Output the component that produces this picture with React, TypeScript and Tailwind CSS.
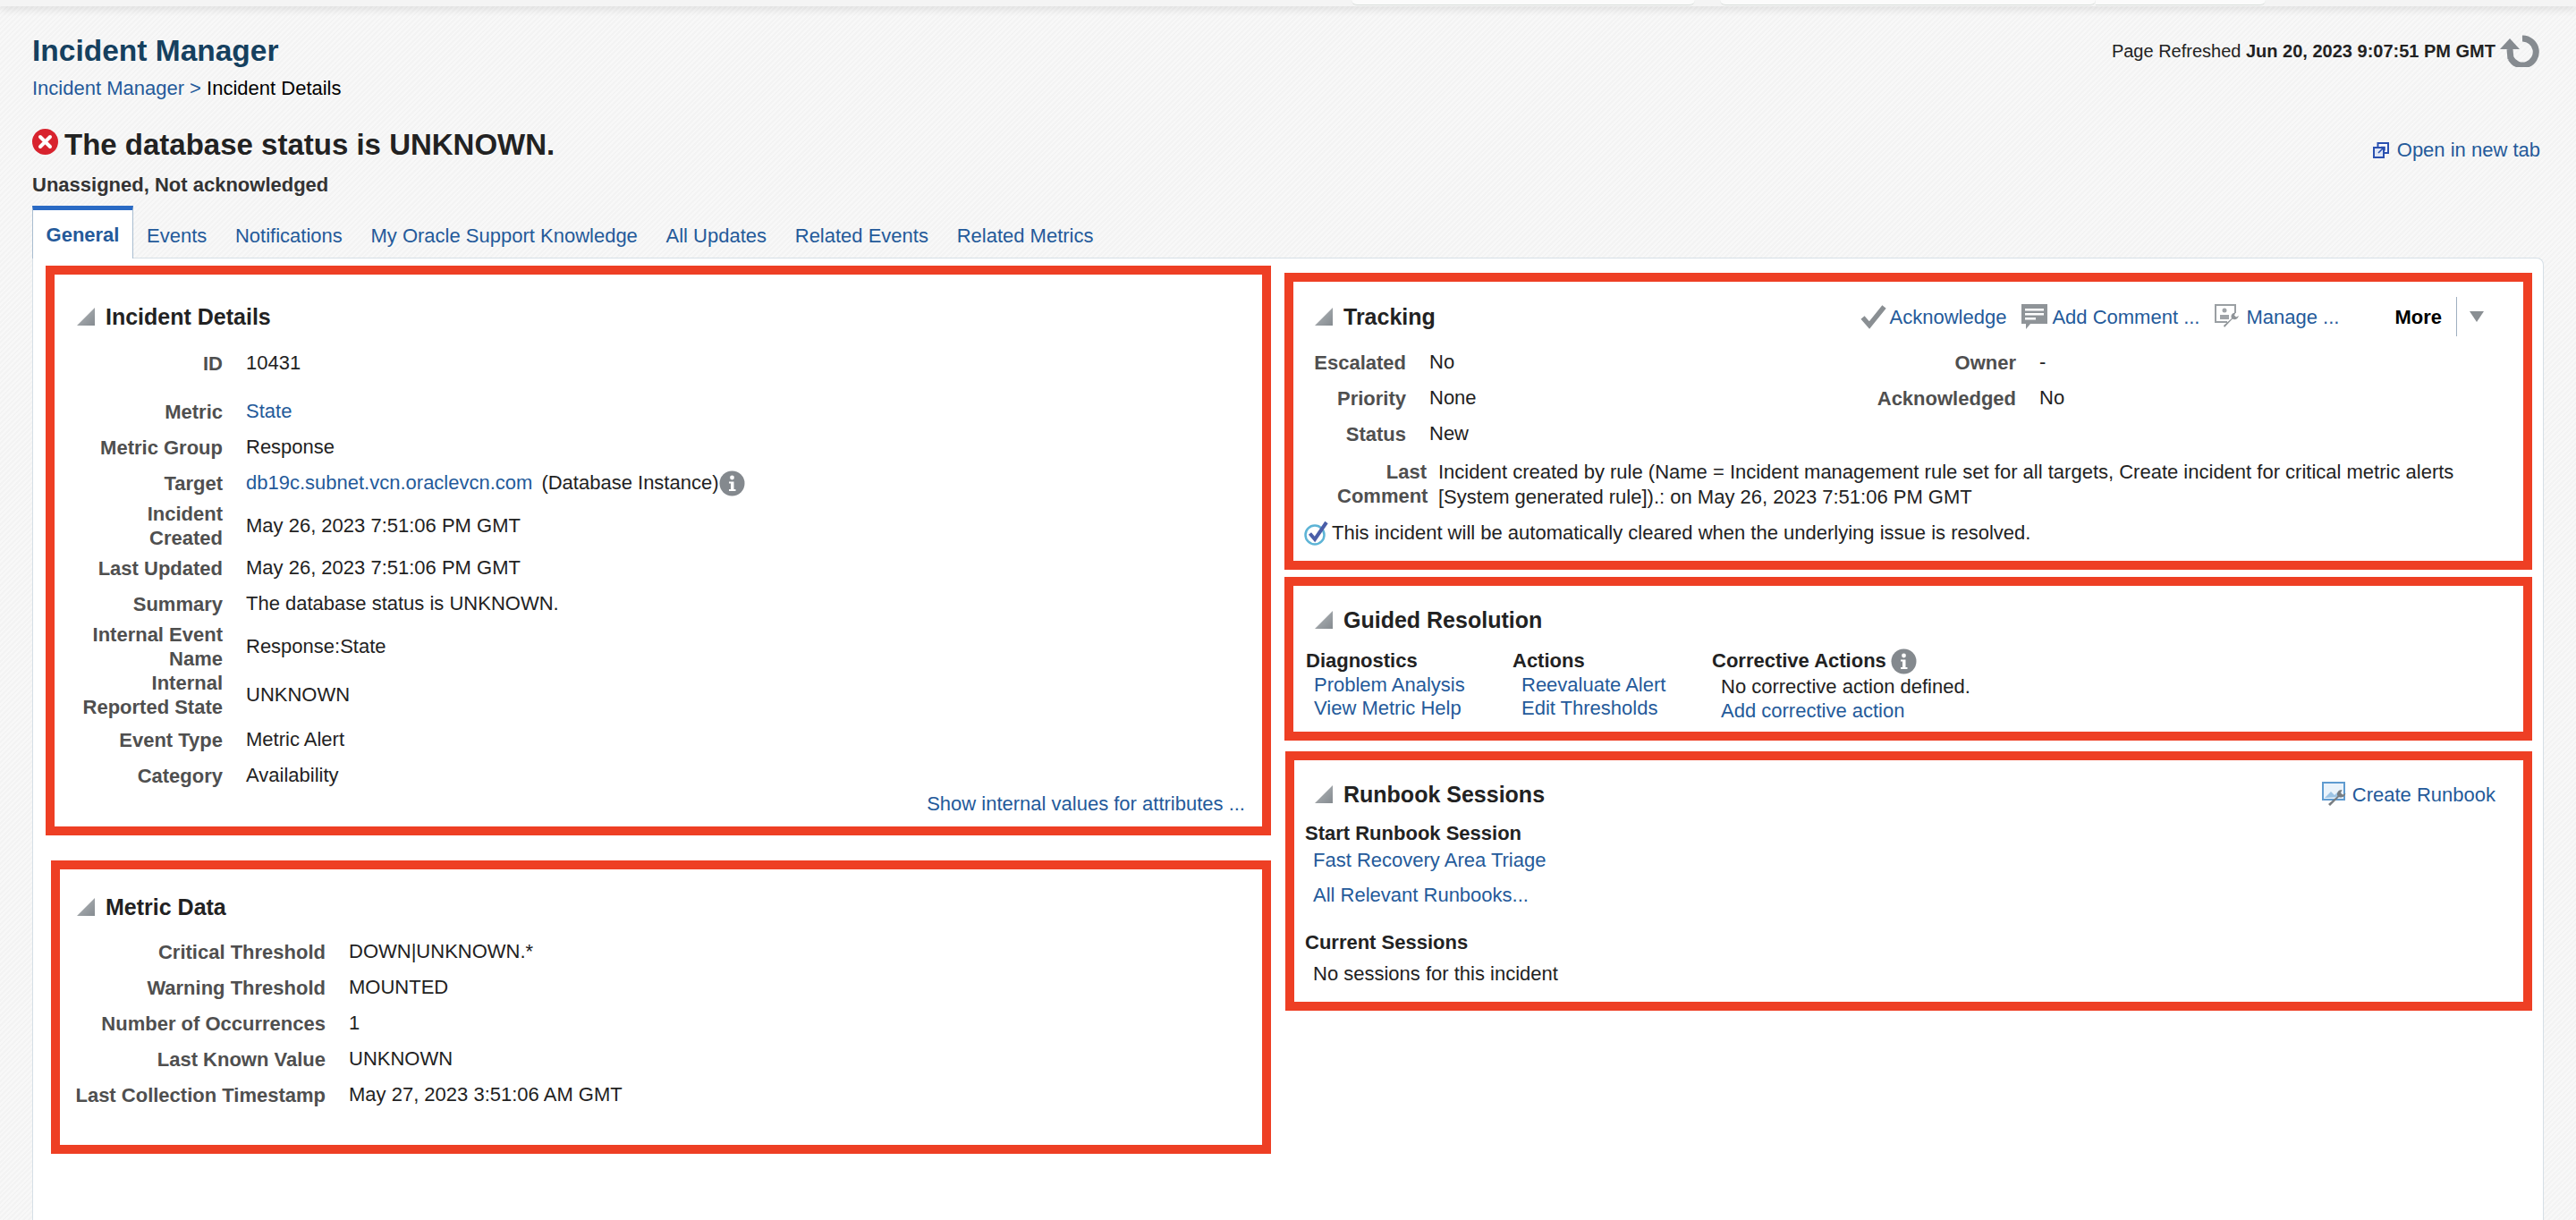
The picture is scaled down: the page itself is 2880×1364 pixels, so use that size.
import React from "react";

const linkColor = "text-[#245a9a]";

const Triangle = () => (
    <svg width="20" height="20" viewBox="0 0 20 20" className="shrink-0">
        <defs>
            <linearGradient id="tri" x1="0" y1="0" x2="1" y2="1">
                <stop offset="0" stopColor="#b4b8bb" />
                <stop offset="1" stopColor="#858b90" />
            </linearGradient>
        </defs>
        <polygon points="20,0 20,20 0,20" fill="url(#tri)" />
    </svg>
);

const InfoIcon = () => (
    <svg width="29" height="29" viewBox="0 0 29 29" className="shrink-0">
        <circle cx="14.5" cy="14.5" r="14" fill="#84898e" />
        <circle cx="14.5" cy="8" r="2.4" fill="#fff" />
        <path d="M11 12.5h5.5v8.5H18.500v2h-7.500v-2h2v-6.500h-2z" fill="#fff" />
    </svg>
);

const ErrorIcon = () => (
    <svg width="29" height="29" viewBox="0 0 29 29" className="shrink-0">
        <circle cx="14.500" cy="14.500" r="14.500" fill="#d8232e" />
        <path d="M9 9l11 11M20 9L9 20" stroke="#fff" strokeWidth="4" strokeLinecap="round" />
    </svg>
);

const RefreshIcon = () => (
    <svg width="44" height="37" viewBox="0 0 44 37" className="shrink-0">
        <path d="M25 5A15 15 0 1 1 12 27" fill="none" stroke="#868b90" strokeWidth="7" />
        <path d="M11 17L12 28" fill="none" stroke="#868b90" strokeWidth="7" />
        <polygon points="0,17 22,17 11,5" fill="#868b90" />
    </svg>
);

const NewTabIcon = () => (
    <svg width="18" height="18" viewBox="0 0 18 18" className="shrink-0" fill="none">
        <rect x="5.500" y="1" width="11.500" height="11" fill="#fff" stroke="#2a50b0" strokeWidth="2" />
        <rect x="1" y="6" width="11" height="11" fill="#dfe6f5" stroke="#2a50b0" strokeWidth="2" />
        <path d="M6 12l6-6M9 5.500h4v4" stroke="#2a50b0" strokeWidth="1.600" />
    </svg>
);

const CheckIcon = () => (
    <svg width="29" height="28" viewBox="0 0 29 28" className="shrink-0">
        <path d="M2.500 15L10 23.500L26.500 3" fill="none" stroke="#8a8f93" strokeWidth="5.500" />
    </svg>
);

const CommentIcon = () => (
    <svg width="29" height="28" viewBox="0 0 29 28" className="shrink-0">
        <path d="M0 0h29v22H10l-5 6v-6H0z" fill="#8f9498" />
        <path d="M4 5h21v2.500H4zM4 10h21v2.500H4zM4 15h12v2.500H4z" fill="#fff" />
    </svg>
);

const ManageIcon = () => (
    <svg width="29" height="28" viewBox="0 0 29 28" className="shrink-0" fill="none">
        <path d="M14 20H1V1h22v9" stroke="#9a9fa3" strokeWidth="2" />
        <circle cx="11" cy="7" r="2.500" fill="#a0a4a8" />
        <path d="M6 12h10v5H6z" fill="#a0a4a8" />
        <path d="M11 26l9-9.500c2 1.500 6 .5 7-3.500l-3 1.500-2-2 1.500-3c-4 0-6 3-4.500 6.500L10 24z" fill="#8f9498" />
    </svg>
);

const RunbookIcon = () => (
    <svg width="29" height="28" viewBox="0 0 29 28" className="shrink-0" fill="none">
        <rect x="1" y="1" width="24" height="19" fill="#eaf3fb" stroke="#5f9bd0" strokeWidth="2" />
        <path d="M3 18l7-7 4 4 3-3 5 5z" fill="#9cc3e4" />
        <path d="M9 27l10-10c2.500 1.500 6.500 0 7.500-4l-3.500 1.500-2-2 1.500-3.500c-4.500 0-6.500 3.500-5 7L7 25z" fill="#777d82" />
    </svg>
);

const ClearedIcon = () => (
    <svg width="27" height="28" viewBox="0 0 27 28" className="shrink-0" fill="none">
        <circle cx="12" cy="16" r="10.500" stroke="#5db4d6" strokeWidth="2.500" />
        <path d="M6.500 14.500L12 21L25 2" stroke="#4a5ea8" strokeWidth="4" />
    </svg>
);

const Header = ({ title, right, className }: { title: string; right?: React.ReactNode; className: string }) => (
    <div className={`flex items-center justify-between h-[30px] ${className}`}>
        <div className="flex items-center gap-[12px]">
            <Triangle />
            <span className="text-[25px] leading-[30px] font-bold text-[#222]">{title}</span>
        </div>
        {right}
    </div>
);

const detailRows = [
    { label: "ID", value: "10431", cls: "h-[40px] mb-[14px]" },
    { label: "Metric", value: <span className={linkColor}>State</span>, cls: "h-[40px]" },
    { label: "Metric Group", value: "Response", cls: "h-[40px]" },
    {
        label: "Target",
        value: (
            <span className="flex items-center">
                <span className={linkColor}>db19c.subnet.vcn.oraclevcn.com</span>
                <span className="ml-[10px]">(Database Instance)</span>
                <InfoIcon />
            </span>
        ),
        cls: "h-[40px] mb-[1px]",
    },
    { label: "Incident Created", value: "May 26, 2023 7:51:06 PM GMT", cls: "h-[54px]" },
    { label: "Last Updated", value: "May 26, 2023 7:51:06 PM GMT", cls: "h-[40px]" },
    { label: "Summary", value: "The database status is UNKNOWN.", cls: "h-[40px] mb-[1px]" },
    { label: "Internal Event Name", value: "Response:State", cls: "h-[54px]" },
    { label: "Internal Reported State", value: "UNKNOWN", cls: "h-[54px] mb-[3px]" },
    { label: "Event Type", value: "Metric Alert", cls: "h-[40px]" },
    { label: "Category", value: "Availability", cls: "h-[40px]" },
];

const metricRows = [
    { label: "Critical Threshold", value: "DOWN|UNKNOWN.*" },
    { label: "Warning Threshold", value: "MOUNTED" },
    { label: "Number of Occurrences", value: "1" },
    { label: "Last Known Value", value: "UNKNOWN" },
    { label: "Last Collection Timestamp", value: "May 27, 2023 3:51:06 AM GMT" },
];

const trackingRows = [
    { label: "Escalated", value: "No", label2: "Owner", value2: "-" },
    { label: "Priority", value: "None", label2: "Acknowledged", value2: "No" },
    { label: "Status", value: "New", label2: "", value2: "" },
];

const tabs = ["Events", "Notifications", "My Oracle Support Knowledge", "All Updates", "Related Events", "Related Metrics"];

const Label = ({ children, className }: { children: React.ReactNode; className: string }) => (
    <div className={`text-right font-bold text-[#4f4f4f] text-[22px] leading-[27px] ${className}`}>{children}</div>
);

export default function App() {
    return (
        <div className="w-[2880px] h-[1364px] overflow-hidden bg-[repeating-linear-gradient(135deg,#f8f8f8_0px,#f8f8f8_2px,#f3f3f3_2px,#f3f3f3_4px)] font-['Liberation_Sans',Arial,sans-serif] text-[22px] leading-[26px] text-[#222]">
            {/* browser strip */}
            <div className="flex h-[7px] bg-[#f4f4f4] shadow-[0_3px_10px_rgba(0,0,0,0.12)] relative">
                <div className="ml-[1511px] w-[384px] h-[6px] bg-[#fbfbfb] border-b border-[#d9dedb] rounded-bl-md rounded-br-md" />
                <div className="ml-[28px] w-[420px] h-[6px] bg-[#fbfbfb] border-b border-[#d9dedb] rounded-bl-md rounded-br-md" />
                <div className="w-[190px] h-[6px] bg-[#fbfbfb] border-b border-[#d9dedb] rounded-br-md" />
            </div>

            <div className="px-[36px]">
                <div className="flex justify-between items-start pt-[30px]">
                    <div className="text-[33.5px] leading-[40px] font-bold text-[#15405f]">Incident Manager</div>
                    <div className="flex items-center gap-[5px] mr-[5px] mt-[1px]">
                        <span className="text-[20px]">
                            Page Refreshed <span className="font-bold">Jun 20, 2023 9:07:51 PM GMT</span>
                        </span>
                        <RefreshIcon />
                    </div>
                </div>
                <div className="mt-[9px]">
                    <span className={linkColor}>Incident Manager &gt;</span> <span className="text-black">Incident Details</span>
                </div>
                <div className="flex justify-between items-start mt-[28px]">
                    <div className="flex items-start gap-[7px]">
                        <div className="mt-[4px]">
                            <ErrorIcon />
                        </div>
                        <span className="text-[33px] leading-[44px] font-bold text-[#222]">The database status is UNKNOWN.</span>
                    </div>
                    <div className={`flex items-center gap-[9px] mt-[15px] mr-[4px] ${linkColor}`}>
                        <NewTabIcon />
                        <span>Open in new tab</span>
                    </div>
                </div>
                <div className="mt-[10px] font-bold text-[#333]">Unassigned, Not acknowledged</div>

                <div className="flex items-start mt-[10px] h-[58px]">
                    <div className="relative z-10 h-[59px] w-[113px] bg-white border-t-[5px] border-t-[#2a6ac4] border-x border-x-[#a9bdd0] text-center pt-[15px] font-bold text-[#245a9a]">
                        General
                    </div>
                    <div className={`flex gap-[31.7px] pl-[15px] pt-[21px] ${linkColor}`}>
                        {tabs.map((t) => (
                            <span key={t}>{t}</span>
                        ))}
                    </div>
                </div>

                {/* white panel */}
                <div className="w-[2808px] h-[1076px] bg-white border border-[#d6dfe6] border-b-0 rounded-tr-lg pl-[14px] pt-[8px] flex gap-[15px]">
                    <div className="w-[1370px] shrink-0">
                        <section className="h-[637px] border-[10px] border-[#ee3f24]">
                            <Header title="Incident Details" className="mt-[32px] ml-[25px]" />
                            <div className="mt-[17px]">
                                {detailRows.map((r) => (
                                    <div key={r.label} className={`flex items-center ${r.cls}`}>
                                        <Label className="ml-[23px] w-[165px]">{r.label}</Label>
                                        <div className="ml-[26px]">{r.value}</div>
                                    </div>
                                ))}
                            </div>
                            <div className={`flex justify-end pr-[19px] mt-[-1px] ${linkColor}`}>Show internal values for attributes ...</div>
                        </section>

                        <section className="h-[328px] mt-[28px] ml-[6px] border-[10px] border-[#ee3f24]">
                            <Header title="Metric Data" className="mt-[27px] ml-[19px]" />
                            <div className="mt-[15px]">
                                {metricRows.map((r) => (
                                    <div key={r.label} className="flex items-center h-[40px]">
                                        <Label className="ml-[19px] w-[278px] flex justify-end whitespace-nowrap">{r.label}</Label>
                                        <div className="ml-[26px]">{r.value}</div>
                                    </div>
                                ))}
                            </div>
                        </section>
                    </div>

                    <div className="w-[1395px] shrink-0 mt-[8px]">
                        <section className="h-[332px] border-[10px] border-[#ee3f24]">
                            <Header
                                title="Tracking"
                                className="mt-[24px] ml-[24px] mr-[44px]"
                                right={
                                    <div className={`flex items-center ${linkColor}`}>
                                        <CheckIcon />
                                        <span className="ml-[4px] pt-[2px]">Acknowledge</span>
                                        <span className="ml-[17px]">
                                            <CommentIcon />
                                        </span>
                                        <span className="ml-[5px] pt-[2px]">Add Comment ...</span>
                                        <span className="ml-[17px]">
                                            <ManageIcon />
                                        </span>
                                        <span className="ml-[6px] pt-[2px]">Manage ...</span>
                                        <span className="ml-[62px] pt-[2px] font-bold text-black">More</span>
                                        <span className="ml-[16px] w-px h-[44px] bg-[#9fb0c0]" />
                                        <span className="ml-[14px] w-0 h-0 border-x-[8px] border-x-transparent border-t-[12px] border-t-[#8a8f93]" />
                                    </div>
                                }
                            />
                            <div className="mt-[16px]">
                                {trackingRows.map((r) => (
                                    <div key={r.label} className="grid grid-cols-[126px_470px_160px_1fr] gap-x-[26px] items-center h-[40px]">
                                        <Label className="">{r.label}</Label>
                                        <div>{r.value}</div>
                                        <Label className="">{r.label2}</Label>
                                        <div>{r.value2}</div>
                                    </div>
                                ))}
                            </div>
                            <div className="flex mt-[9px] leading-[27.5px]">
                                <Label className="ml-[49px] w-[100px] leading-[27.5px]">Last Comment</Label>
                                <div className="ml-[13px]">
                                    Incident created by rule (Name = Incident management rule set for all targets, Create incident for critical metric alerts
                                    <br />
                                    [System generated rule]).: on May 26, 2023 7:51:06 PM GMT
                                </div>
                            </div>
                            <div className="flex items-center mt-[13px] ml-[12px] gap-[4px]">
                                <ClearedIcon />
                                <span>This incident will be automatically cleared when the underlying issue is resolved.</span>
                            </div>
                        </section>

                        <section className="h-[183px] mt-[8px] border-[10px] border-[#ee3f24]">
                            <Header title="Guided Resolution" className="mt-[23px] ml-[24px]" />
                            <div className="flex mt-[18px] ml-[14px]">
                                <div className="w-[231px]">
                                    <div className="font-bold">Diagnostics</div>
                                    <div className={`ml-[9px] mt-[1px] ${linkColor}`}>
                                        <div>Problem Analysis</div>
                                        <div>View Metric Help</div>
                                    </div>
                                </div>
                                <div className="w-[223px]">
                                    <div className="font-bold">Actions</div>
                                    <div className={`ml-[10px] mt-[1px] ${linkColor}`}>
                                        <div>Reevaluate Alert</div>
                                        <div>Edit Thresholds</div>
                                    </div>
                                </div>
                                <div>
                                    <div className="flex items-center gap-[5px] h-[26px] font-bold">
                                        Corrective Actions
                                        <InfoIcon />
                                    </div>
                                    <div className="ml-[10px] mt-[3px]">No corrective action defined.</div>
                                    <div className={`ml-[10px] mt-[1px] ${linkColor}`}>Add corrective action</div>
                                </div>
                            </div>
                        </section>

                        <section className="h-[290px] mt-[12px] ml-[1px] border-[10px] border-[#ee3f24]">
                            <Header
                                title="Runbook Sessions"
                                className="mt-[23px] ml-[23px] mr-[31px]"
                                right={
                                    <div className={`flex items-center gap-[5px] ${linkColor}`}>
                                        <RunbookIcon />
                                        <span className="pt-[2px]">Create Runbook</span>
                                    </div>
                                }
                            />
                            <div className="ml-[12px]">
                                <div className="mt-[16px] font-bold">Start Runbook Session</div>
                                <div className={`mt-[4px] ml-[9px] ${linkColor}`}>Fast Recovery Area Triage</div>
                                <div className={`mt-[13px] ml-[9px] ${linkColor}`}>All Relevant Runbooks...</div>
                                <div className="mt-[27px] font-bold">Current Sessions</div>
                                <div className="mt-[9px] ml-[9px]">No sessions for this incident</div>
                            </div>
                        </section>
                    </div>
                </div>
            </div>
        </div>
    );
}
